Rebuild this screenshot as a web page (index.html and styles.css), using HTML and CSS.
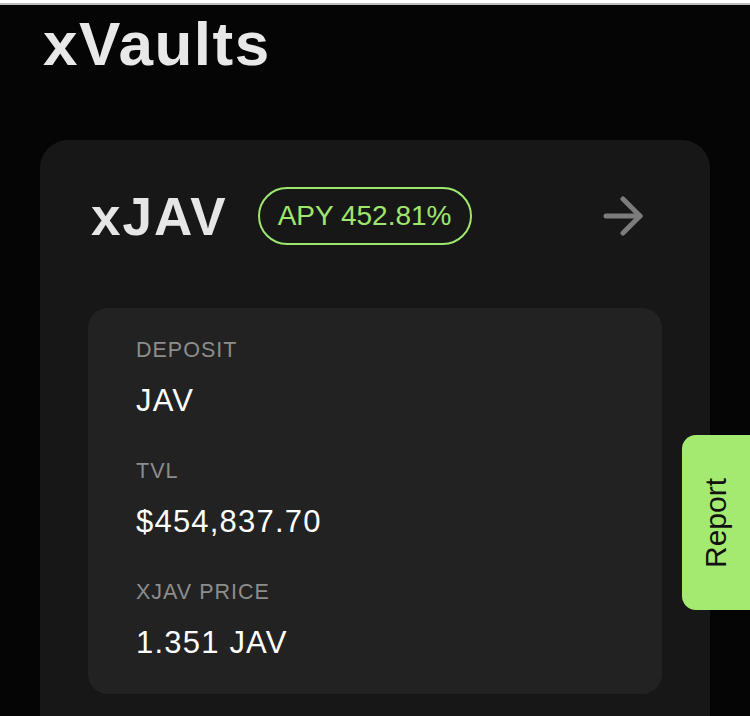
FILE: index.html
```html
<!DOCTYPE html>
<html lang="en">
<head>
    <meta charset="UTF-8">
    <meta name="viewport" content="width=device-width, initial-scale=1.0">
    <title>xVaults</title>
    <link rel="stylesheet" href="styles.css">
</head>
<body>
    <div class="top-edge"></div>
    <div class="app-container">
        <h1 class="page-title">xVaults</h1>

        <div class="vault-card">
            <div class="vault-header">
                <h2 class="vault-name">xJAV</h2>
                <span class="apy-badge">APY 452.81%</span>
                <button class="open-button" aria-label="Open vault">
                    <svg width="40" height="40" viewBox="0 0 40 40" fill="none" stroke="#7c7c7c" stroke-width="5" stroke-linecap="round" stroke-linejoin="round">
                        <line x1="3" y1="20" x2="37" y2="20"/>
                        <polyline points="20,3 37,20 20,37"/>
                    </svg>
                </button>
            </div>

            <div class="vault-stats">
                <div class="stat">
                    <span class="stat-label">DEPOSIT</span>
                    <span class="stat-value">JAV</span>
                </div>
                <div class="stat">
                    <span class="stat-label">TVL</span>
                    <span class="stat-value">$454,837.70</span>
                </div>
                <div class="stat">
                    <span class="stat-label">XJAV PRICE</span>
                    <span class="stat-value">1.351 JAV</span>
                </div>
            </div>
        </div>
    </div>

    <button class="report-tab"><span>Report</span></button>
</body>
</html>
```

FILE: styles.css
```css
* { margin: 0; padding: 0; box-sizing: border-box; }

html, body {
    overflow: hidden;
}

html {
    background: #050505;
}

body {
    font-family: 'Liberation Sans', Arial, sans-serif;
    color: #ffffff;
    min-height: 100vh;
}

.top-edge {
    height: 5px;
    background: linear-gradient(180deg, #ffffff 0, #ffffff 3px, #bdbdbd 3px, #bdbdbd 5px);
}

.app-container {
    padding: 8px 40px 0 40px;
}

.page-title {
    font-size: 62px;
    font-weight: 700;
    line-height: 1;
    letter-spacing: 1.5px;
    color: #e8e8e8;
    padding-left: 3px;
    margin-bottom: 65px;
}

/* card is cut off by the bottom of the screen */
.vault-card {
    width: 670px;
    background: #171717;
    border-radius: 28px 28px 0 0;
    padding: 47px 48px 24px;
}

.vault-header {
    display: flex;
    align-items: center;
    gap: 30px;
    height: 58px;
    margin-bottom: 63px;
}

.vault-name {
    font-size: 53px;
    font-weight: 700;
    line-height: 1;
    letter-spacing: 2px;
    color: #e6e6e6;
    padding-left: 3px;
}

.apy-badge {
    font-size: 28px;
    line-height: 32px;
    color: #9fe66e;
    border: 2px solid #9fe66e;
    border-radius: 29px;
    padding: 11px 18px;
}

.open-button {
    margin-left: auto;
    margin-right: 19px;
    background: none;
    border: none;
    width: 40px;
    height: 40px;
    cursor: pointer;
}

.open-button svg {
    display: block;
}

.vault-stats {
    background: #222222;
    border-radius: 20px;
    padding: 29px 48px 33px;
    display: flex;
    flex-direction: column;
    gap: 39px;
}

.stat {
    display: flex;
    flex-direction: column;
    gap: 20px;
}

.stat-label {
    font-size: 21.5px;
    line-height: 26px;
    color: #8d8d8d;
    letter-spacing: 1px;
}

.stat-value {
    font-size: 31px;
    line-height: 36px;
    letter-spacing: 1.2px;
    color: #ffffff;
}

.report-tab {
    position: fixed;
    top: 435px;
    right: 0;
    width: 68px;
    height: 175px;
    background: #a4ea70;
    border: none;
    border-radius: 14px 0 0 14px;
    display: flex;
    align-items: center;
    justify-content: center;
    cursor: pointer;
}

.report-tab span {
    display: block;
    transform: rotate(-90deg);
    font-family: 'Liberation Sans', Arial, sans-serif;
    font-size: 30px;
    color: #111111;
    white-space: nowrap;
}
```
